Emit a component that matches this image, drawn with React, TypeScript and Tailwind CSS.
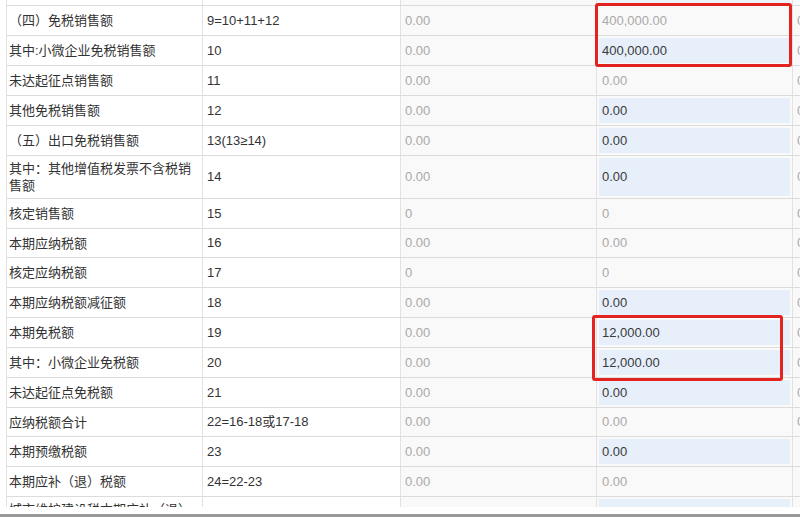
type TaxRow = {
  label: string
  no: string
  c3: string
  c4: string
  edit: boolean
  c5: string
  h: string
}

const rows: TaxRow[] = [
  { label: '（四）免税销售额', no: '9=10+11+12', c3: '0.00', c4: '400,000.00', edit: false, c5: '0.00', h: 'h-[30px]' },
  { label: '其中:小微企业免税销售额', no: '10', c3: '0.00', c4: '400,000.00', edit: true, c5: '0.00', h: 'h-[30px]' },
  { label: '未达起征点销售额', no: '11', c3: '0.00', c4: '0.00', edit: false, c5: '0.00', h: 'h-[30px]' },
  { label: '其他免税销售额', no: '12', c3: '0.00', c4: '0.00', edit: true, c5: '0.00', h: 'h-[30px]' },
  { label: '（五）出口免税销售额', no: '13(13≥14)', c3: '0.00', c4: '0.00', edit: true, c5: '0.00', h: 'h-[30px]' },
  { label: '其中：其他增值税发票不含税销售额', no: '14', c3: '0.00', c4: '0.00', edit: true, c5: '0.00', h: 'h-[43px]' },
  { label: '核定销售额', no: '15', c3: '0', c4: '0', edit: false, c5: '0', h: 'h-[30px]' },
  { label: '本期应纳税额', no: '16', c3: '0.00', c4: '0.00', edit: false, c5: '0.00', h: 'h-[29px]' },
  { label: '核定应纳税额', no: '17', c3: '0', c4: '0', edit: false, c5: '0', h: 'h-[30px]' },
  { label: '本期应纳税额减征额', no: '18', c3: '0.00', c4: '0.00', edit: true, c5: '0.00', h: 'h-[30px]' },
  { label: '本期免税额', no: '19', c3: '0.00', c4: '12,000.00', edit: true, c5: '0.00', h: 'h-[30px]' },
  { label: '其中：小微企业免税额', no: '20', c3: '0.00', c4: '12,000.00', edit: true, c5: '0.00', h: 'h-[30px]' },
  { label: '未达起征点免税额', no: '21', c3: '0.00', c4: '0.00', edit: true, c5: '0.00', h: 'h-[30px]' },
  { label: '应纳税额合计', no: '22=16-18或17-18', c3: '0.00', c4: '0.00', edit: false, c5: '0.00', h: 'h-[29px]' },
  { label: '本期预缴税额', no: '23', c3: '0.00', c4: '0.00', edit: true, c5: '', h: 'h-[30px]' },
  { label: '本期应补（退）税额', no: '24=22-23', c3: '0.00', c4: '0.00', edit: false, c5: '', h: 'h-[30px]' },
  { label: '城市维护建设税本期应补（退）税额', no: '', c3: '', c4: '', edit: true, c5: '', h: 'h-[43px]' },
]

const cols = 'grid grid-cols-[196px_198px_196px_196px_1fr]'

function Row({ r }: { r: TaxRow }) {
  return (
    <div className={`${cols} ${r.h} border-b border-[#dcdcdc]`}>
      <div className="flex items-center border-r border-[#e2e2e2] bg-white pl-[2px] pr-[1px] leading-[17px] text-[#333]">
        {r.label}
      </div>
      <div className="flex items-center border-r border-[#e2e2e2] bg-white pl-[4px] text-[#333]">{r.no}</div>
      <div className="flex items-center border-r border-[#e2e2e2] bg-[#f9f9f9] pl-[4px] text-[#a9a9a9]">{r.c3}</div>
      <div className="flex border-r border-[#e2e2e2] bg-[#f9f9f9] p-[2px]">
        {r.edit ? (
          <div className="flex flex-1 items-center bg-[#e6effa] pl-[3px] text-[#3a3a3a]">{r.c4}</div>
        ) : (
          <div className="flex flex-1 items-center pl-[3px] text-[#a9a9a9]">{r.c4}</div>
        )}
      </div>
      <div className="flex items-center bg-[#f9f9f9] pl-[4px] text-[#a9a9a9]">{r.c5}</div>
    </div>
  )
}

export default function App() {
  return (
    <div className="relative flex h-[517px] w-[800px] flex-col overflow-hidden bg-white font-['Liberation_Sans','Noto_Sans_CJK_SC',sans-serif] text-[13px]">
      <div className="ml-[6px] h-[507px] overflow-hidden border-l border-[#e2e2e2]">
        {/* tail of the previous row */}
        <div className={`${cols} h-[6px] border-b border-[#dcdcdc]`}>
          <div className="border-r border-[#e2e2e2] bg-white" />
          <div className="border-r border-[#e2e2e2] bg-white" />
          <div className="border-r border-[#e2e2e2] bg-[#f9f9f9]" />
          <div className="border-r border-[#e2e2e2] bg-[#f9f9f9] px-[2px] pb-[2px]">
            <div className="h-full bg-[#eef3fa]" />
          </div>
          <div className="bg-[#f9f9f9]" />
        </div>
        {rows.map((r, i) => (
          <Row key={i} r={r} />
        ))}
      </div>
      <div className="flex-1 bg-white" />
      <div className="h-[3px] bg-[#999]" />

      {/* red highlight boxes */}
      <div className="absolute left-[595px] top-[3px] h-[64px] w-[197px] rounded-[3px] border-[3px] border-[#e3231f]" />
      <div className="absolute left-[592px] top-[315px] h-[66px] w-[191px] rounded-[3px] border-[3px] border-[#e3231f]" />
    </div>
  )
}
